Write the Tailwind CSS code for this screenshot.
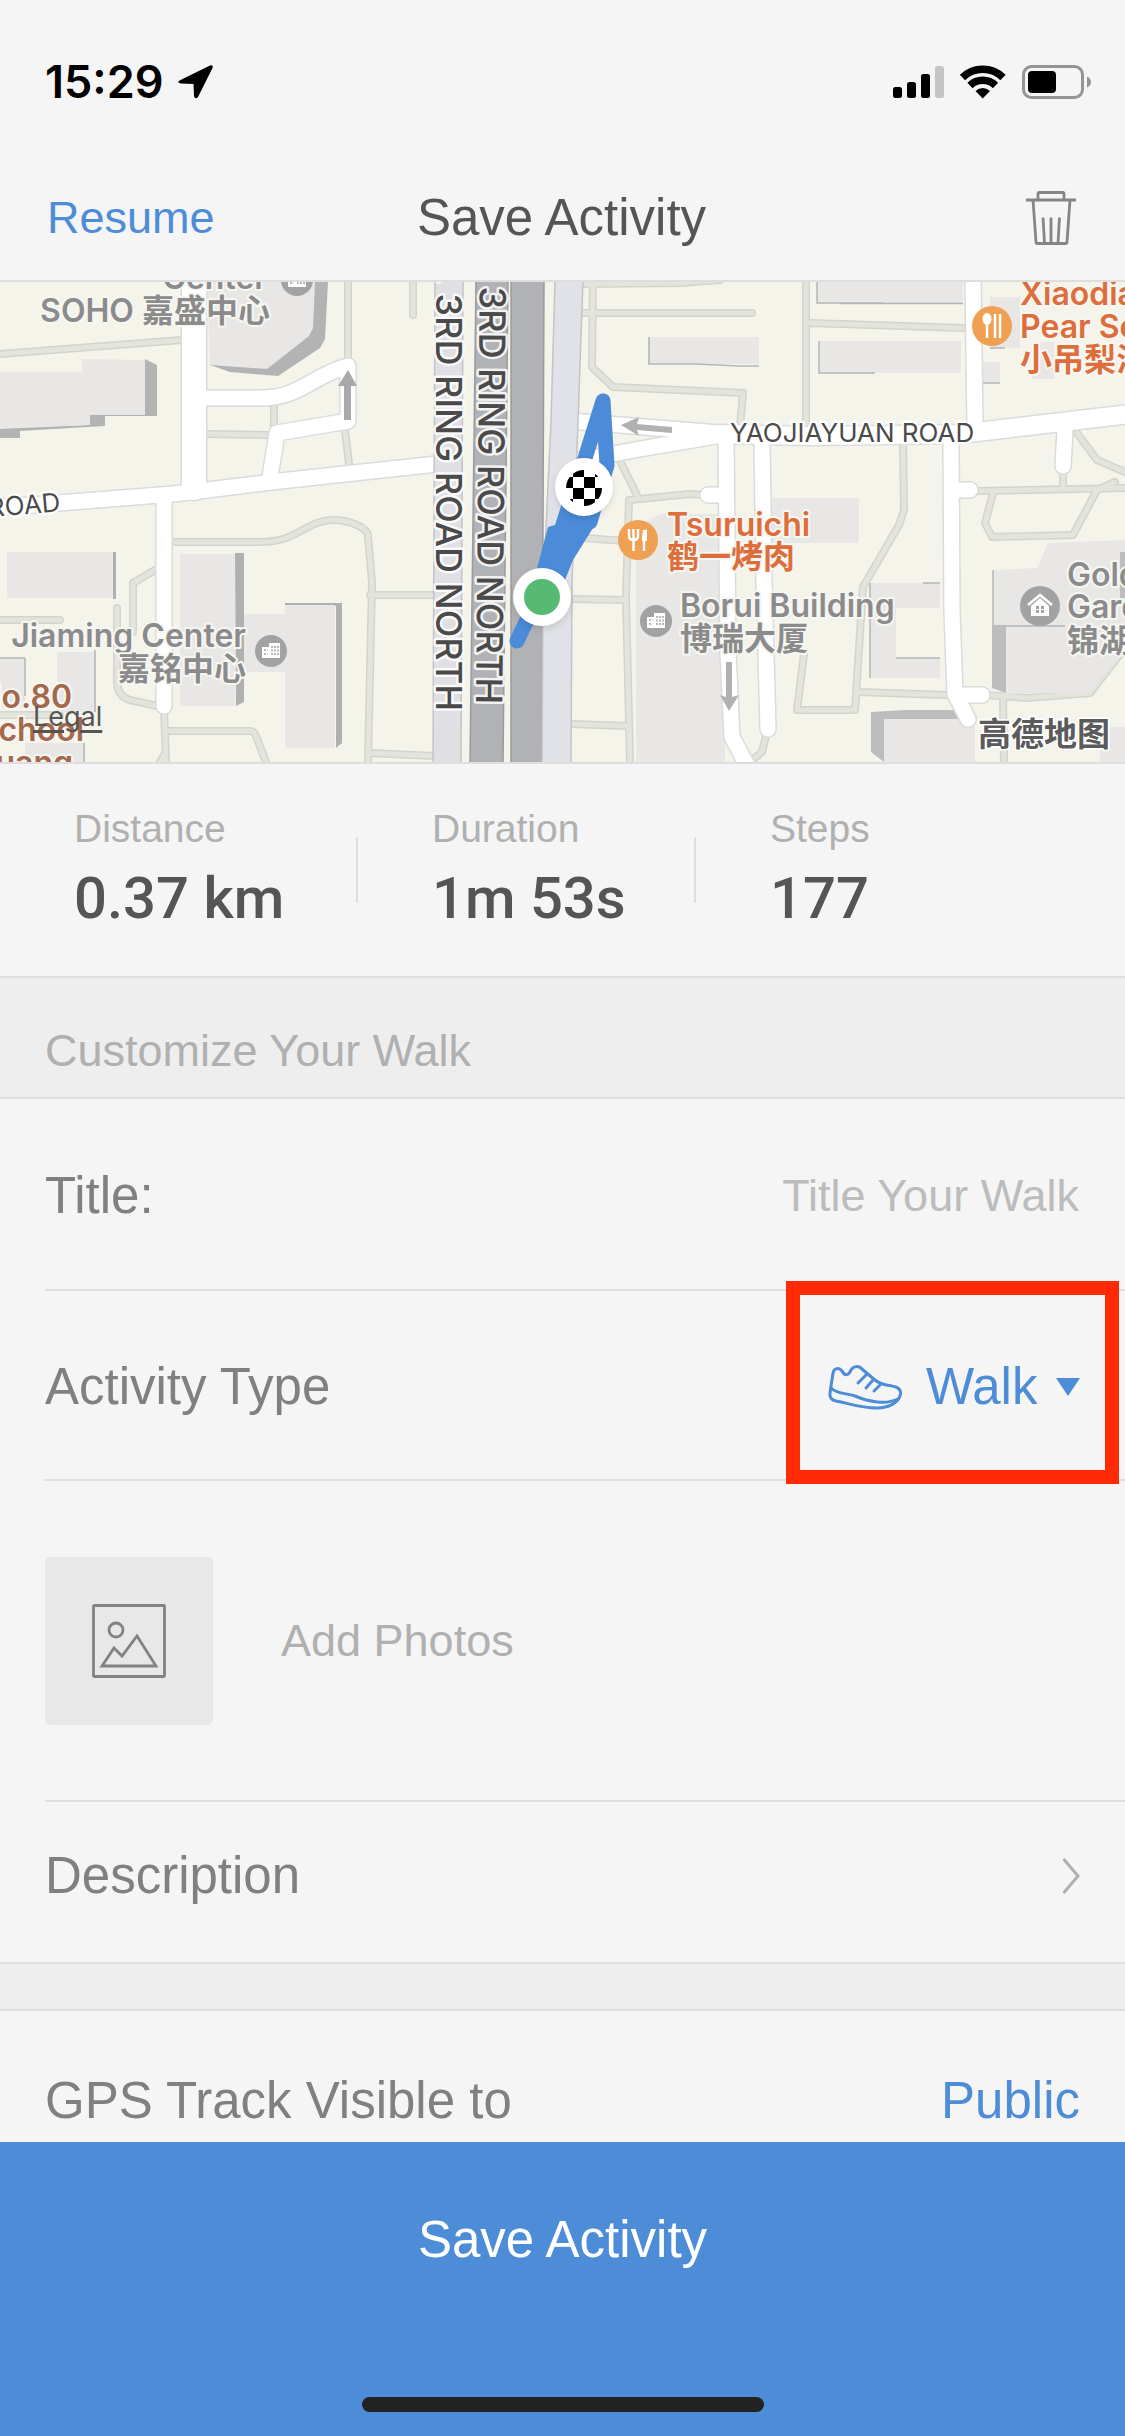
<!DOCTYPE html>
<html lang="en">
<head>
    <meta charset="UTF-8">
    <meta name="viewport" content="width=device-width, initial-scale=1.0">
    <title>Save Activity</title>
    <script src="https://cdn.jsdelivr.net/npm/@tailwindcss/browser@4"></script>
</head>
<body class="bg-[#f5f5f5] font-['Liberation_Sans',Arial,sans-serif] text-[51px] text-[#808080]">
    <div class="flex flex-col h-screen">
        <!-- Status bar -->
        <div class="flex items-center justify-between h-[154px] pt-[10px] pl-[45px] pr-[34px] text-black">
            <div class="flex items-center gap-[14px]">
                <span class="font-['Inter',sans-serif] font-semibold text-[45px] leading-[52px]">15:29</span>
                <svg class="w-[35px] h-[34px]" viewBox="0 0 35 34" aria-label="Location in use">
                    <path d="M32 .5Q35.500-.5 34.500 3L20 32Q17 35 16 31L15.500 19L3 18.500Q-1.500 18 1.500 15.500Z"/>
                </svg>
            </div>
            <div class="flex items-center gap-4">
                <svg class="w-[51px] h-[33px]" viewBox="0 0 51 33" aria-label="Signal">
                    <rect x="0" y="21" width="9" height="11" rx="2.500"/>
                    <rect x="14" y="16" width="9" height="16" rx="2.500"/>
                    <rect x="28" y="8" width="9" height="24" rx="2.500"/>
                    <rect x="42" y="0" width="9" height="32" rx="2.500" fill="#c4c4c4"/>
                </svg>
                <svg class="w-[46px] h-[34px]" viewBox="0 0 46 34" fill="none" stroke="#000" stroke-width="7.500" aria-label="Wi-Fi">
                    <path d="M2.500 12.500A29 29 0 0 1 43 12.500"/>
                    <path d="M10 20.500A18 18 0 0 1 35.500 20.500"/>
                    <path d="M15.500 26Q22.700 20 30 26L22.700 33.500Z" fill="#000" stroke="none"/>
                </svg>
                <svg class="w-[69px] h-[34px]" viewBox="0 0 69 34" aria-label="Battery">
                    <rect x="1.500" y="1.500" width="59" height="31" rx="8" fill="none" stroke="#959595" stroke-width="3"/>
                    <rect x="6" y="6" width="28" height="22" rx="4"/>
                    <path d="M65 11.500Q69 13 69 17Q69 21 65 22.500Z" fill="#959595"/>
                </svg>
            </div>
        </div>

        <!-- Nav bar -->
        <header class="grid grid-cols-3 items-center h-[128px] pt-[2px] pl-[47px] pr-[49px] border-b-2 border-[#dedede]">
            <button class="justify-self-start text-[45px] text-[#4d8cd6]">Resume</button>
            <h1 class="justify-self-center whitespace-nowrap text-[#555555]">Save Activity</h1>
            <button class="justify-self-end" aria-label="Delete">
                <svg class="w-[50px] h-[54px]" viewBox="0 0 50 54" fill="none" stroke="#858585" stroke-width="2.800">
                    <path d="M0 9H50M12 9V3Q12 1.500 13.500 1.500H36.500Q38 1.500 38 3V9"/>
                    <path d="M7 9L10 51Q10 52.500 11.500 52.500H39.500Q41 52.500 41 51L44 9"/>
                    <path d="M17 26.500L18.500 52M25 26.500V52M33.500 26.500L32 52"/>
                </svg>
            </button>
        </header>

        <main class="flex-1 min-h-0 overflow-y-auto [scrollbar-width:none]">
            <!-- Route map -->
            <div class="relative border-b-2 border-[#dedede]">
                <svg class="block w-full h-[480px] font-['Inter','Noto_Sans_CJK_SC',sans-serif]" viewBox="0 0 1125 480" preserveAspectRatio="xMidYMid slice">
                    <defs>
                        <g id="lanes">
                            <path d="M0 72L182 58M348 0V78M413-10V33M274 122V150M207 152L268 153M345 148L349 182"/>
                            <path d="M173 260H260C300 260 305 238 333 238C350 238 368 246 368 254L372 300L368 480M370 313H435M368 471L435 474"/>
                            <path d="M155 288L133 301V350M117 326V400Q118 415 130 418L157 424M-5 338H60M-5 433H60M164 425L166 480M167 449H250Q254 449 256 454L266 480M166 470L160 480"/>
                            <path d="M593-5L592 85L613 105L743 111L740 145M583 31H752M583 2L680 1L720-2M618 175L637 213M705 213L690 212L629 218L626 315L630 480M570 255L625 259M570 317L625 318M570 442L628 444"/>
                            <path d="M806-5V145M810 41L963 46M903 161L904 228L899 243L863 305L855 428H797L804 372M858 410L945 413M976 209L1125 206M1063 186V207M1077 151L1097 178L1125 190"/>
                            <path d="M993 211L985 241L992 255L1073 253L1097 208L1115 200M985 413L1027 416L1090 411L1125 366M1003 415L1004 480M767 450L762 470L750 480"/>
                        </g>
                        <g id="streets">
                            <path d="M-5 226L173 212L207 208L280 199L437 182"/>
                            <path d="M164 215V424M207 116H262C300 116 315 92 348 84V139L277 151L270 195"/>
                            <path d="M570 139L720 151M570 180L640 167L722 153M726 155L728 370L732 455L748 485M762 160L764 300L768 447"/>
                            <path d="M951 160L952 330L955 412L968 437M973-5L975 145M955 208H970M957 413H982M1065 148L1063 184M720 213H708"/>
                        </g>
                        <g id="avenues">
                            <path d="M720 152L810 154L960 152L1070 139L1130 132"/>
                        </g>
                        <g id="office">
                            <circle r="16" fill="#a2a2a2"/>
                            <path d="M-9 7V-4H-2V-8H9V7Z" fill="#fff"/>
                            <path d="M-7-1H-3M-7 3H-3M1-5V5M4-5V5M7-5V5" stroke="#a2a2a2" stroke-width="1.500" stroke-dasharray="2 1.500"/>
                        </g>
                    </defs>

                    <rect width="1125" height="480" fill="#f4f4eb"/>

                    <!-- small roads -->
                    <g fill="none" stroke-linecap="round" stroke-linejoin="round">
                        <use href="#lanes" stroke="#d4d4ce" stroke-width="8"/>
                        <use href="#lanes" stroke="#e4e4dd" stroke-width="5"/>
                    </g>

                    <!-- buildings -->
                    <g fill="#e8e7e6">
                        <path d="M145 77L157 83V134H105V144L20 149V156H0V146L90 143V133H145Z" fill="#b3b3b3"/>
                        <path d="M0 90H82V77L145 78V133H90V143L0 147Z"/>
                        <path d="M314 0H328L325 57L320 66L278 94L230 90L210 83L267 80Z" fill="#b3b3b3"/>
                        <path d="M207 0H315L313 46L309 54L267 87L210 83Z"/>
                        <path d="M113 270H116V317H113ZM235 271H244V420L236 424ZM285 321H342V461L336 466V324H285Z" fill="#b0b0b0"/>
                        <path d="M7 270H113V316H7ZM180 272H235V424H180ZM285 323H335V466H285ZM244 332H285V390H244Z"/>
                        <path d="M57 370H96V430H57ZM0 376H25V426H0ZM25 461H85V480H25Z"/>
                        <path d="M95 368V430M25 376V414M0 376H25M84 461V480" stroke="#b5b5b5" stroke-width="1.500"/>
                        <path d="M648 55H759V82H648ZM817 0H963V21H817ZM819 59H961V91H819ZM990 15H1020V66H990ZM980 80H1000V101H980ZM1032 60H1054V97H1032Z"/>
                        <path d="M770 216H859V261H770ZM870 301H940V326H896V376H940V396H870Z"/>
                        <path d="M636 480V245L660 232H725V480Z"/>
                        <path d="M993 288L1037 286L1048 261L1125 258V366L1090 410L1005 412L993 405ZM1100 445H1125V480H1100Z"/>
                        <path d="M992 343H1006V411L992 406ZM871 430L905 428H955L972 437H884V480L871 470ZM1120 270H1125V316H1120Z" fill="#bdbdbd"/>
                        <path d="M884 437H975V480H884Z"/>
                        <path d="M649 55V82H695L740 84H759M817 0V21H884M840 21.500H963M819 59V91H875M990 66H1005M980 101H1000M870 301V396M923 301H940M896 376H940M770 216V261M993 288V343M1006 344H1065" fill="none" stroke="#b5b5b5" stroke-width="1.500"/>
                    </g>

                    <!-- streets -->
                    <g fill="none" stroke-linecap="round" stroke-linejoin="round">
                        <path d="M194-20V206" stroke="#dbdbdb" stroke-width="27"/>
                        <use href="#streets" stroke="#dbdbdb" stroke-width="18"/>
                        <use href="#avenues" stroke="#dbdbdb" stroke-width="21"/>
                        <path d="M194-20V206" stroke="#fff" stroke-width="24"/>
                        <use href="#streets" stroke="#fff" stroke-width="15"/>
                        <use href="#avenues" stroke="#fff" stroke-width="18"/>
                    </g>

                    <!-- ring road -->
                    <g stroke-width="1.500">
                        <path d="M435-2H463L461 482H433Z" fill="#dfdfe4" stroke="#c4c4c6"/>
                        <path d="M476-2H508L503 482H470Z" fill="#b1b2b6" stroke="#9b9b9d"/>
                        <path d="M511-2H544L542 482H511Z" fill="#b1b2b6" stroke="#9b9b9d"/>
                        <path d="M555-2L551 140L543 310L542 482H571L572 300L578 140L583-2Z" fill="#e0e2e8" stroke="#c4c4c6"/>
                    </g>

                    <!-- one-way arrows -->
                    <g fill="#b0b2b0">
                        <path d="M348 88L357 104H351V138H344V104H338Z" fill="#a9a9a9"/>
                        <path d="M621 143L639 135L637 142L672 145V151L637 148L639 154Z"/>
                        <path d="M729 429L720 413L726 415V380H732V415L739 413Z"/>
                    </g>

                    <!-- road names -->
                    <g fill="#4a4a4a" stroke="#fff" stroke-opacity=".85" stroke-width="5" stroke-linejoin="round" paint-order="stroke">
                        <g class="text-[36px] font-medium" text-anchor="end">
                            <text transform="translate(436 429) rotate(90)">E. 3RD RING ROAD NORTH</text>
                            <text transform="translate(476 422) rotate(90.500)">3RD RING ROAD NORTH</text>
                        </g>
                        <g class="text-[26px]">
                            <text transform="translate(61 229) rotate(-5)" text-anchor="end">ROAD</text>
                            <text x="730" y="160">YAOJIAYUAN ROAD</text>
                        </g>
                    </g>

                    <!-- places -->
                    <g class="text-[32px] font-semibold" fill="#8b8b8b" stroke="#f6f6f2" stroke-width="4" stroke-linejoin="round" paint-order="stroke">
                        <text x="267" y="7" text-anchor="end">Center</text>
                        <text x="270" y="40" text-anchor="end">SOHO 嘉盛中心</text>
                        <text x="246" y="365" text-anchor="end">Jiaming Center</text>
                        <text x="246" y="398" text-anchor="end">嘉铭中心</text>
                        <text x="680" y="335">Borui Building</text>
                        <text x="680" y="368">博瑞大厦</text>
                        <text x="1067" y="304">Golden</text>
                        <text x="1067" y="336">Garden</text>
                        <text x="1067" y="370">锦湖园</text>
                        <g fill="#dd6d3b">
                            <text x="1020" y="23">Xiaodiao</text>
                            <text x="1020" y="56">Pear Soup</text>
                            <text x="1020" y="89">小吊梨汤</text>
                            <text x="667" y="254">Tsuruichi</text>
                            <text x="667" y="286">鹤一烤肉</text>
                        </g>
                        <g fill="#a4694b" text-anchor="end">
                            <text x="72" y="426">No.80</text>
                            <text x="84" y="459">School</text>
                            <text x="73" y="492">Guang</text>
                        </g>
                    </g>
                    <text x="978" y="464" class="text-[33px] font-bold" fill="#5b5b5b" stroke="#fff" stroke-width="3" paint-order="stroke">高德地图</text>

                    <use href="#office" x="297" y="-2"/>
                    <use href="#office" x="271" y="369"/>
                    <use href="#office" x="656" y="339"/>
                    <g transform="translate(1040 324)">
                        <circle r="20" fill="#a2a2a2"/>
                        <path d="M-12-1L0-11L12-1" fill="none" stroke="#fff" stroke-width="2.500"/>
                        <path d="M-9 10V0L0-8L9 0V10Z" fill="#fff"/>
                        <path d="M-4 0H-1V3H-4ZM1 0H4V3H1ZM-4 4H-1V7H-4ZM1 4H4V7H1Z" fill="#a2a2a2"/>
                    </g>
                    <g transform="translate(638 258)">
                        <circle r="20" fill="#f0a052"/>
                        <path d="M-9-11V-4Q-9 0-4.500 0Q0 0 0-4V-11M-4.500-11V11M6-10V11" fill="none" stroke="#fff" stroke-width="2.500"/>
                        <path d="M9-11Q3-9 4 1H9Z" fill="#fff"/>
                    </g>
                    <g transform="translate(992 44)">
                        <circle r="20" fill="#f0a052"/>
                        <ellipse cx="-5" cy="-7" rx="4.500" ry="6" fill="#fff"/>
                        <path d="M-5-4V12M3-12V12M8-12V12" stroke="#fff" stroke-width="2.500"/>
                    </g>

                    <!-- recorded track -->
                    <g fill="none" stroke="#4b8bd8" stroke-width="15" stroke-linecap="round" stroke-linejoin="round">
                        <path d="M517 359L545 300L576 205L603 119L607 183L590 240"/>
                        <path d="M562 221L555 243L548 245L536 290L565 298L573 278L598 238L600 215Z" fill="#4b8bd8" stroke="none"/>
                    </g>
                    <g class="drop-shadow-md">
                        <circle cx="584" cy="205" r="29" fill="#fff"/>
                        <circle cx="542" cy="315" r="29" fill="#fff"/>
                    </g>
                    <circle cx="542" cy="315" r="18" fill="#56ba72"/>
                    <clipPath id="flag"><circle cx="584" cy="206" r="18"/></clipPath>
                    <path clip-path="url(#flag)" d="M573 184H584V195H573ZM562 195H573V206H562ZM584 195H595V206H584ZM573 206H584V217H573ZM595 206H606V217H595ZM584 217H595V228H584ZM562 217H573V228H562ZM595 184H606V195H595Z"/>
                </svg>
                <a href="#legal" class="absolute left-[33px] bottom-[28px] text-[27px] leading-[34px] font-['Inter',sans-serif] text-[#555555] underline decoration-3 underline-offset-4">Legal</a>
            </div>

            <!-- Stats -->
            <dl class="grid grid-cols-[358px_338px_1fr] items-center h-[214px] border-b-2 border-[#dedede] text-[39px] leading-[46px] text-[#b0b0b0]">
                <div class="flex items-center pl-[74px] h-[66px] border-r-2 border-[#dedede]">
                    <div class="flex flex-col gap-[10px]">
                        <dt>Distance</dt>
                        <dd class="whitespace-nowrap font-['Roboto',sans-serif] font-medium text-[58px] leading-[72px] text-[#555555]">0.37 km</dd>
                    </div>
                </div>
                <div class="flex items-center pl-[74px] h-[66px] border-r-2 border-[#dedede]">
                    <div class="flex flex-col gap-[10px]">
                        <dt>Duration</dt>
                        <dd class="whitespace-nowrap font-['Roboto',sans-serif] font-medium text-[58px] leading-[72px] text-[#555555]">1m 53s</dd>
                    </div>
                </div>
                <div class="flex items-center pl-[74px] h-[66px]">
                    <div class="flex flex-col gap-[10px]">
                        <dt>Steps</dt>
                        <dd class="whitespace-nowrap font-['Roboto',sans-serif] font-medium text-[58px] leading-[72px] text-[#555555]">177</dd>
                    </div>
                </div>
            </dl>

            <h2 class="flex items-center h-[121px] pt-[26px] px-[45px] bg-[#eeeeee] border-b-2 border-[#dedede] text-[45px] text-[#b0b0b0]">Customize Your Walk</h2>

            <!-- Form rows -->
            <form id="activityForm" class="pl-[45px]">
                <div class="flex items-center justify-between h-[192px] pt-[4px] pr-[46px] border-b-2 border-[#dedede]">
                    <label for="title">Title:</label>
                    <input type="text" id="title" placeholder="Title Your Walk" class="w-[500px] text-right text-[45px] text-[#808080] placeholder:text-[#bcbcbc] outline-none">
                </div>
                <div class="relative flex items-center justify-between h-[190px] pt-[4px] pr-[45px] border-b-2 border-[#dedede]">
                    <label for="activityType">Activity Type</label>
                    <div class="flex items-center text-[#4d8cd6]">
                        <svg class="w-[74px] h-[45px] mr-[24px]" viewBox="0 0 74 45" fill="none" stroke="currentColor" stroke-width="3" stroke-linecap="round" stroke-linejoin="round" aria-hidden="true">
                            <path d="M5 8C6 3 11 2 14 6C17 12 21 10 23 5C25 1 31 0 35 5L47 15C53 20 58 20 64 21C71 22 73 25 72.500 29C71 38 60 43 49 43C32 43 20 38 8 36C3 35 1.500 32 2 28Z"/>
                            <path d="M3 23C9 29 18 28 27 31C41 37 58 40 70 34"/>
                            <path d="M38 10L30 18M45 15L38 23M52 20L46 26"/>
                        </svg>
                        <select id="activityType" class="appearance-none outline-none">
                            <option>Walk</option>
                        </select>
                        <svg class="w-[24px] h-[18px] ml-[18px]" viewBox="0 0 24 18" fill="currentColor" aria-hidden="true"><path d="M0 0H24L12 18Z"/></svg>
                    </div>
                    <span class="absolute -top-[10px] -bottom-[5px] right-[6px] w-[333px] border-[14px] border-[#ff2a04] pointer-events-none"></span>
                </div>
                <div class="flex items-center h-[321px] border-b-2 border-[#dedede]">
                    <button type="button" class="flex items-center gap-[68px] text-[45px] text-[#b0b0b0]">
                        <span class="flex items-center justify-center w-[168px] h-[168px] rounded-[5px] bg-[#e8e8e8]">
                            <svg class="w-[74px] h-[74px]" viewBox="0 0 74 74" fill="none" stroke="#828282" stroke-width="2.800" aria-hidden="true">
                                <rect x="1.500" y="1.500" width="71" height="71" rx="1"/>
                                <circle cx="24" cy="26" r="7"/>
                                <path d="M10 62L22 44L30 52L45 32L64 62Z"/>
                            </svg>
                        </span>
                        Add Photos
                    </button>
                </div>
                <button type="button" class="flex items-center justify-between w-full h-[160px] pb-[12px] pr-[45px]">
                    Description
                    <svg class="w-[18px] h-[36px]" viewBox="0 0 18 36" fill="none" stroke="#b0b0b0" stroke-width="3" aria-hidden="true"><path d="M1.500 1L16 18L1.500 35"/></svg>
                </button>
            </form>

            <div class="h-[49px] bg-[#eeeeee] border-y-2 border-[#dedede]"></div>

            <div class="flex items-center justify-between h-[177px] pt-[4px] px-[45px]">
                <span id="visibility">GPS Track Visible to</span>
                <button aria-describedby="visibility" class="text-[#4d8cd6]">Public</button>
            </div>
        </main>

        <!-- Save button -->
        <footer class="flex flex-col items-center justify-between pb-[24px] h-[294px] bg-[#4d8dd7]">
            <button type="submit" form="activityForm" class="w-full h-[193px] pt-[4px] text-white">Save Activity</button>
            <div class="w-[402px] h-[15px] rounded-full bg-[#222222]"></div>
        </footer>
    </div>
</body>
</html>
